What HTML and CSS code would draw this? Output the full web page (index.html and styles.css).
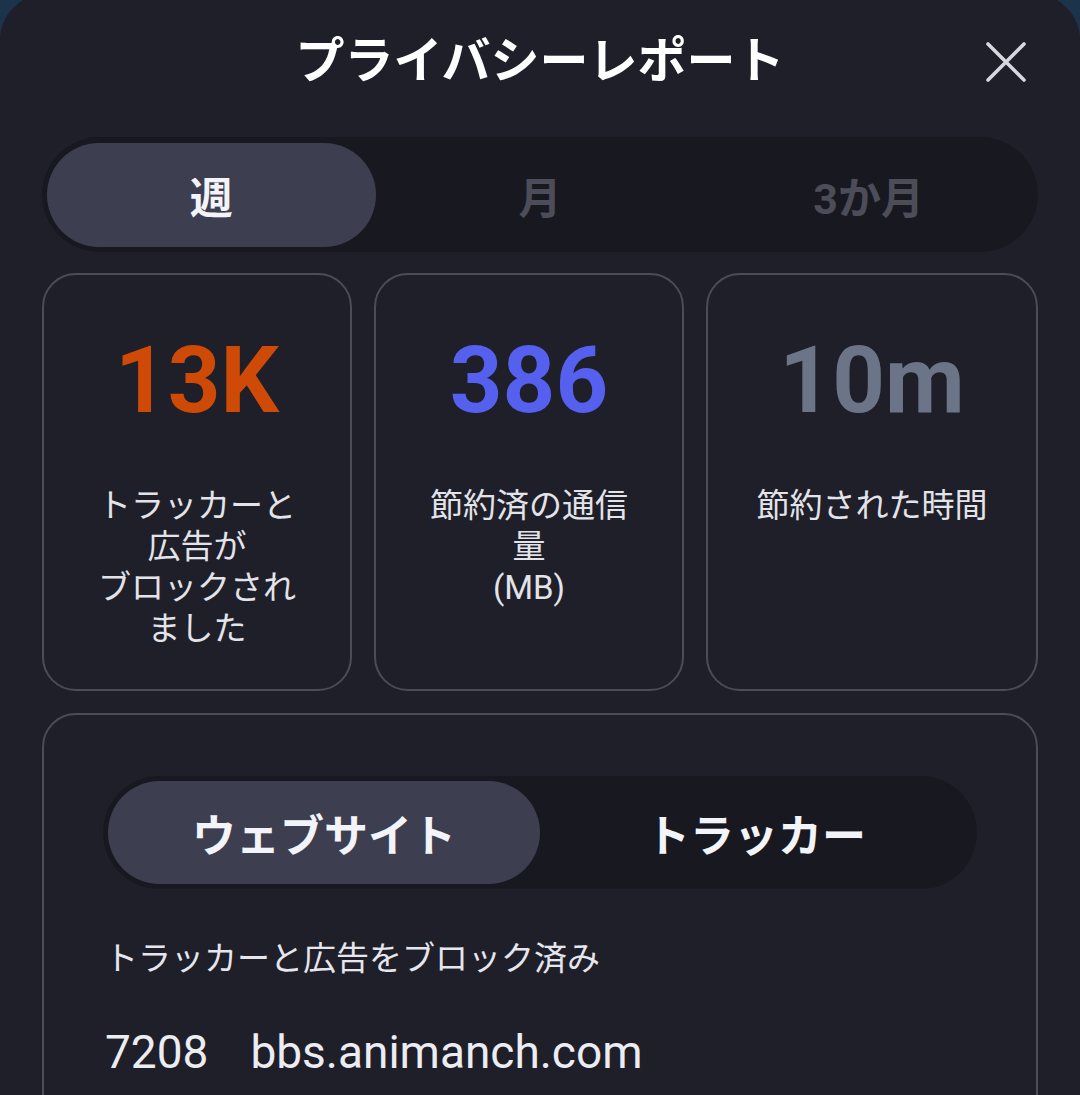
FILE: index.html
```html
<!DOCTYPE html>
<html lang="ja">
<head>
    <meta charset="UTF-8">
    <title>プライバシーレポート</title>
    <link rel="stylesheet" href="styles.css">
</head>
<body>

<div class="sheet">
    <div class="header">
        <div></div>
        <h1 class="title">プライバシーレポート</h1>
        <button class="close" aria-label="閉じる">
            <svg viewBox="0 0 64 64" width="64" height="64">
                <path d="M14 14 L50 50 M50 14 L14 50" stroke="#d6d7df" stroke-width="3.6" stroke-linecap="round" fill="none"/>
            </svg>
        </button>
    </div>

    <div class="segmented period">
        <button class="seg active">週</button>
        <button class="seg">月</button>
        <button class="seg">3か月</button>
    </div>

    <div class="stats">
        <div class="stat">
            <div class="stat-value orange">13K</div>
            <div class="stat-label">トラッカーと<br>広告が<br>ブロックされ<br>ました</div>
        </div>
        <div class="stat">
            <div class="stat-value blue">386</div>
            <div class="stat-label">節約済の通信<br>量<br>(MB)</div>
        </div>
        <div class="stat">
            <div class="stat-value grey">10m</div>
            <div class="stat-label">節約された時間</div>
        </div>
    </div>

    <div class="panel">
        <div class="segmented kind">
            <button class="seg active">ウェブサイト</button>
            <button class="seg">トラッカー</button>
        </div>
        <div class="panel-caption">トラッカーと広告をブロック済み</div>
        <div class="site-row">
            <span class="site-count">7208</span>
            <span class="site-name">bbs.animanch.com</span>
        </div>
    </div>
</div>

</body>
</html>
```

FILE: styles.css
```css
* {
    box-sizing: border-box;
    font-family: Roboto, "Noto Sans CJK JP", sans-serif;
}
body {
    margin: 0;
    height: 1095px;
    overflow: hidden;
    background: #1b344c;
}
.sheet {
    margin-top: -6px;
    min-height: 1110px;
    background: #1e1f29;
    border-radius: 46px 46px 0 0;
    padding: 28px 42px 0;
    color: #e6e6ee;
}
.header {
    display: grid;
    grid-template-columns: 1fr auto 1fr;
    align-items: center;
    height: 80px;
}
.title {
    margin: 0;
    font-size: 49px;
    font-weight: 700;
    line-height: 80px;
    color: #ffffff;
}
.close {
    justify-self: end;
    width: 64px;
    height: 64px;
    padding: 0;
    border: none;
    background: none;
    display: flex;
    cursor: pointer;
}
.segmented {
    display: grid;
    background: #181920;
    padding: 5px;
    border-radius: 60px;
}
.period {
    margin-top: 35px;
    grid-template-columns: repeat(3, 1fr);
    padding: 6px 5px 5px;
}
.kind {
    grid-template-columns: repeat(2, 1fr);
}
.seg {
    border: none;
    background: none;
    border-radius: 60px;
    height: 104px;
    font-size: 43px;
    font-weight: 700;
    color: #4c4d59;
    cursor: pointer;
}
.seg.active {
    background: #3d3f50;
    color: #f3f3fa;
}
.kind .seg {
    height: 103px;
    font-size: 44px;
    color: #f3f3fa;
}
.stats {
    display: grid;
    grid-template-columns: 310px 310px 1fr;
    gap: 22px;
    margin-top: 21px;
}
.stat {
    height: 418px;
    border: 2px solid #4a4c57;
    border-radius: 34px;
    display: flex;
    flex-direction: column;
    align-items: center;
    text-align: center;
    padding: 51px 12px 0;
}
.stat-value {
    font-size: 92px;
    font-weight: 700;
    line-height: 110px;
}
.orange { color: #cf4a06; }
.blue { color: #5660ee; }
.grey { color: #6b7587; }
.stat-label {
    margin-top: 49px;
    font-size: 33px;
    line-height: 41px;
    color: #e3e3ea;
}
.panel {
    margin-top: 22px;
    border: 2px solid #4a4c57;
    border-radius: 34px;
    padding: 61px 59px 40px;
    min-height: 420px;
}
.panel-caption {
    margin-top: 49px;
    padding-left: 2px;
    font-size: 33px;
    line-height: 41px;
    color: #e6e6ee;
}
.site-row {
    margin-top: 44px;
    padding-left: 2px;
    display: flex;
    gap: 42px;
    font-size: 46px;
    line-height: 58px;
    color: #ececf3;
}
```
